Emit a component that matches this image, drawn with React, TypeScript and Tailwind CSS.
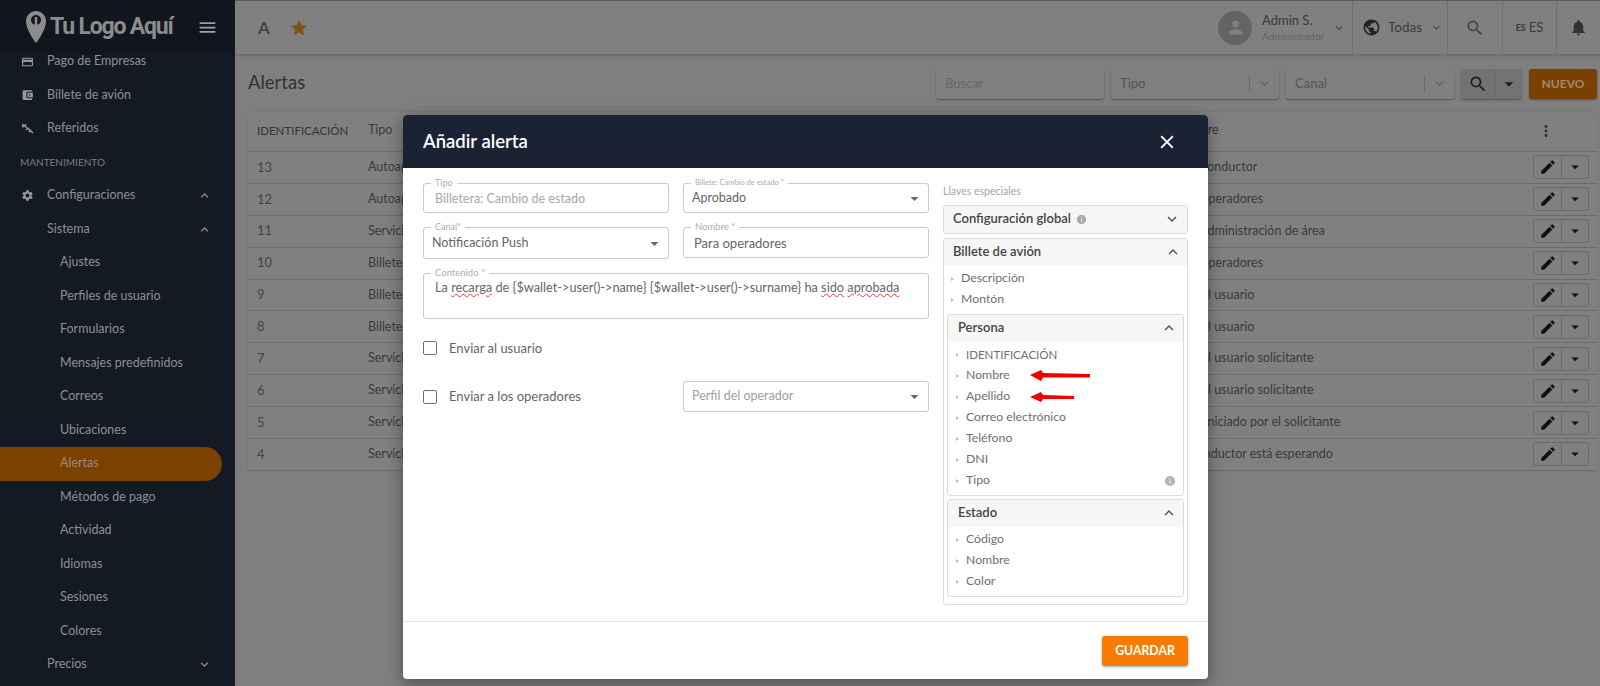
import {
  MdAccountBalanceWallet,
  MdArrowDropDown,
  MdClose,
  MdCreditCard,
  MdEdit,
  MdExpandLess,
  MdExpandMore,
  MdInfo,
  MdMenu,
  MdMoreVert,
  MdNotifications,
  MdPerson,
  MdPublic,
  MdSearch,
  MdSettings,
  MdStar,
} from "react-icons/md";

const subItems = [
  "Ajustes",
  "Perfiles de usuario",
  "Formularios",
  "Mensajes predefinidos",
  "Correos",
  "Ubicaciones",
  "Alertas",
  "Métodos de pago",
  "Actividad",
  "Idiomas",
  "Sesiones",
  "Colores",
];

const rows = [
  { id: "13", tipo: "Autoaprobado", dest: "Para conductor" },
  { id: "12", tipo: "Autoaprobado", dest: "Para operadores" },
  { id: "11", tipo: "Servicio", dest: "Para administración de área" },
  { id: "10", tipo: "Billetera", dest: "Para operadores" },
  { id: "9", tipo: "Billetera", dest: "Para el usuario" },
  { id: "8", tipo: "Billetera", dest: "Para el usuario" },
  { id: "7", tipo: "Servicio", dest: "Para el usuario solicitante" },
  { id: "6", tipo: "Servicio", dest: "Para el usuario solicitante" },
  { id: "5", tipo: "Servicio", dest: "Viaje iniciado por el solicitante" },
  { id: "4", tipo: "Servicio", dest: "Su conductor está esperando" },
];

function Sidebar() {
  return (
    <aside className="flex h-full w-[235px] shrink-0 flex-col overflow-hidden bg-[#141a24] text-[12.5px] text-[#8f8f8f]">
      <div className="z-10 flex h-[54px] shrink-0 items-center bg-[#10151e] pl-[26px] pr-[17px]">
        <svg width="20" height="32" viewBox="0 0 20 32" className="shrink-0">
          <path
            d="M10 0C4.500 0 0 4.500 0 10c0 7 6 17 10 22 4-5 10-15 10-22C20 4.500 15.500 0 10 0z"
            fill="#8c8c8c"
          />
          <circle cx="10" cy="9" r="5" fill="#10151e" />
          <path d="M10 6v12" stroke="#8c8c8c" strokeWidth="2.500" />
        </svg>
        <span className="ml-[4px] whitespace-nowrap font-['Roboto'] text-[23px] font-bold tracking-[-1.2px] text-[#8c8c8c]">
          Tu Logo Aquí
        </span>
        <MdMenu className="ml-auto shrink-0 text-[21px] text-[#a0a0a0]" />
      </div>
      <div className="-mt-[9px] flex flex-col">
        <div className="flex h-[33.5px] items-center pl-[21px]">
          <MdCreditCard className="w-[13px] text-[14px] text-[#9a9a9a]" />
          <span className="ml-[13px]">Pago de Empresas</span>
        </div>
        <div className="flex h-[33.5px] items-center pl-[21px]">
          <MdAccountBalanceWallet className="w-[13px] text-[14px] text-[#9a9a9a]" />
          <span className="ml-[13px]">Billete de avión</span>
        </div>
        <div className="flex h-[33.5px] items-center pl-[21px]">
          <svg width="13" height="13" viewBox="0 0 13 13" fill="none" stroke="#9a9a9a" strokeWidth="1.500">
            <path d="M1 2l4 3 3 2 4 4M1 5l2-1M5 2l-1 2M5 8l2-2M8 10l2-2" />
          </svg>
          <span className="ml-[13px]">Referidos</span>
        </div>
        <div className="flex h-[33.5px] items-center pl-[20px] text-[10px] text-[#7d7d7d]">MANTENIMIENTO</div>
        <div className="flex h-[33.5px] items-center pl-[21px] pr-[23px]">
          <MdSettings className="w-[13px] text-[15px] text-[#9a9a9a]" />
          <span className="ml-[13px]">Configuraciones</span>
          <MdExpandLess className="ml-auto text-[15px]" />
        </div>
        <div className="flex h-[33.5px] items-center pl-[47px] pr-[23px]">
          <span>Sistema</span>
          <MdExpandLess className="ml-auto text-[15px]" />
        </div>
        {subItems.map((item) =>
          item === "Alertas" ? (
            <div key={item} className="mr-[13px] flex h-[33.5px] items-center rounded-r-full bg-[#7a4100] pl-[60px] text-[#9a8a78]">
              {item}
            </div>
          ) : (
            <div key={item} className="flex h-[33.5px] items-center pl-[60px]">
              {item}
            </div>
          )
        )}
        <div className="flex h-[33.5px] items-center pl-[47px] pr-[23px]">
          <span>Precios</span>
          <MdExpandMore className="ml-auto text-[15px]" />
        </div>
      </div>
    </aside>
  );
}

function TopBar() {
  return (
    <header className="flex h-[55px] shrink-0 items-center justify-between border-b border-t border-b-[#6d6d6d] border-t-[#5c5c5c] bg-[#808080] pl-[23px] text-[#3f3f3f] shadow-[0_1px_2px_rgba(0,0,0,0.15)]">
      <div className="flex items-center gap-[19px]">
        <span className="text-[17px] font-bold text-[#444]">A</span>
        <MdStar className="text-[20px] text-[#7d5410]" />
      </div>
      <div className="flex h-full items-center">
        <div className="flex h-full items-center pr-[6px]">
          <div className="flex h-[34px] w-[34px] items-center justify-center rounded-full bg-[#636363]">
            <MdPerson className="text-[21px] text-[#808080]" />
          </div>
          <div className="ml-[10px] flex w-[70px] flex-col leading-none">
            <span className="text-[13px] text-[#3a3a3a]">Admin S.</span>
            <span className="mt-[4px] text-[10px] text-[#626262]">Administrador</span>
          </div>
          <MdExpandMore className="text-[14px] text-[#444]" />
        </div>
        <div className="flex h-full w-[95px] items-center border-l border-[#707070] pl-[9px]">
          <MdPublic className="text-[19px] text-[#222]" />
          <span className="ml-[7px] text-[13.5px] text-[#3a3a3a]">Todas</span>
          <MdExpandMore className="ml-[8px] text-[13px] text-[#444]" />
        </div>
        <div className="flex h-full w-[55px] items-center justify-center border-l border-[#707070]">
          <MdSearch className="text-[20px] text-[#444]" />
        </div>
        <div className="flex h-full w-[54px] items-center justify-center border-l border-[#707070] text-[13px] text-[#3a3a3a]">
          <span className="mr-[3px] text-[9px] font-bold">ES</span>ES
        </div>
        <div className="flex h-full w-[44px] items-center justify-center border-l border-[#707070]">
          <MdNotifications className="text-[19px] text-[#333]" />
        </div>
      </div>
    </header>
  );
}

function FilterSelect({ label }: { label: string }) {
  return (
    <div className="flex h-[30px] w-[168px] items-center rounded-[3px] bg-[#808080] pl-[9px] text-[13px] text-[#555] shadow-[0_1px_2px_rgba(0,0,0,0.35)]">
      <span>{label}</span>
      <span className="ml-auto h-[17px] w-px bg-[#6b6b6b]" />
      <MdExpandMore className="mx-[6px] text-[17px] text-[#666]" />
    </div>
  );
}

function Toolbar() {
  return (
    <div className="flex h-[57px] items-center justify-between pl-[13px] pr-[3px]">
      <h1 className="pb-[2px] text-[18.5px] text-[#333]">Alertas</h1>
      <div className="flex items-center gap-[7px]">
        <div className="flex h-[30px] w-[168px] items-center rounded-[3px] bg-[#808080] pl-[9px] text-[13px] text-[#666] shadow-[0_1px_2px_rgba(0,0,0,0.35)]">
          Buscar
        </div>
        <FilterSelect label="Tipo" />
        <FilterSelect label="Canal" />
        <div className="flex h-[30px] w-[61px] rounded-[3px] bg-[#737373] shadow-[0_1px_2px_rgba(0,0,0,0.35)]">
          <div className="flex flex-1 items-center justify-center border-r border-[#666]">
            <MdSearch className="text-[20px] text-[#1c1c1c]" />
          </div>
          <div className="flex w-[27px] items-center justify-center">
            <MdArrowDropDown className="text-[20px] text-[#1c1c1c]" />
          </div>
        </div>
        <div className="flex h-[30px] w-[68px] items-center justify-center rounded-[3px] bg-[#7a4000] text-[12px] font-bold text-[#a08a70] shadow-[0_1px_2px_rgba(0,0,0,0.35)]">
          NUEVO
        </div>
      </div>
    </div>
  );
}

function AlertTable() {
  return (
    <div className="ml-[13px] mr-[3px] rounded-t-[6px] bg-[#808080] text-[12.5px] text-[#3a3a3a] shadow-[0_0_2px_rgba(0,0,0,0.15)]">
      <div className="grid h-[40px] grid-cols-[111px_806px_359px_1fr] items-center border-b border-[#6d6d6d] pb-[2px] pl-[9px]">
        <span className="text-[11.5px] text-[#333]">IDENTIFICACIÓN</span>
        <span>Tipo</span>
        <span>Nombre</span>
        <MdMoreVert className="ml-[4px] text-[18px] text-[#333]" />
      </div>
      {rows.map((row) => (
        <div
          key={row.id}
          className="grid h-[31.9px] grid-cols-[111px_806px_359px_1fr] items-center border-b border-[#6d6d6d] pl-[9px]"
        >
          <span className="text-[13px] text-[#444]">{row.id}</span>
          <span>{row.tipo}</span>
          <span className="whitespace-nowrap">{row.dest}</span>
          <div className="flex h-[24px] w-[56px] rounded-[3px] border border-[#6a6a6a]">
            <div className="flex w-[28px] items-center justify-center border-r border-[#6a6a6a]">
              <MdEdit className="text-[18px] text-[#111]" />
            </div>
            <div className="flex flex-1 items-center justify-center">
              <MdArrowDropDown className="text-[18px] text-[#111]" />
            </div>
          </div>
        </div>
      ))}
    </div>
  );
}

function Field({
  label,
  className,
  labelClass,
  children,
}: {
  label: string;
  className: string;
  labelClass: string;
  children: React.ReactNode;
}) {
  return (
    <div className={`relative rounded-[3px] border border-[#c9c9c9] ${className}`}>
      <span className={`absolute -top-[6px] left-[7px] bg-white px-[4px] leading-[10px] text-[#adadad] ${labelClass}`}>
        {label}
      </span>
      {children}
    </div>
  );
}

function KeyItem({ label, info, small }: { label: string; info?: boolean; small?: boolean }) {
  return (
    <div className={`flex h-[21px] items-center text-[#6f6f6f] ${small ? "text-[11.5px]" : "text-[12.25px]"}`}>
      <span className="h-0 w-0 border-y-[2px] border-l-[3px] border-y-transparent border-l-[#bdbdbd]" />
      <span className="ml-[7px]">{label}</span>
      {info && <MdInfo className="ml-auto mr-[3px] text-[12px] text-[#b5b5b5]" />}
    </div>
  );
}

function KeyGroup({ title, items }: { title: string; items: { label: string; info?: boolean; small?: boolean }[] }) {
  return (
    <div className="rounded-[3px] border border-[#dcdcdc]">
      <div className="flex h-[27px] items-center bg-[#f6f6f6] pb-[2px] pl-[10px] pr-[5px] text-[13px] font-semibold text-[#444]">
        {title}
        <MdExpandLess className="ml-auto text-[18px] text-[#555]" />
      </div>
      <div className="pb-[4px] pl-[8px] pr-[4px] pt-[2px]">
        {items.map((item) => (
          <KeyItem key={item.label} {...item} />
        ))}
      </div>
    </div>
  );
}

const spell = "underline decoration-[#e53935] decoration-wavy decoration-1";

function AlertModal() {
  return (
    <div className="ml-[403px] mt-[115px] flex h-[564px] w-[805px] flex-col overflow-hidden rounded-[4px] bg-white shadow-[0_4px_16px_rgba(0,0,0,0.4)]">
      <div className="flex h-[53px] shrink-0 items-center justify-between bg-[#1a2333] pl-[20px] pr-[30px] text-white">
        <h2 className="text-[18.5px] font-semibold">Añadir alerta</h2>
        <MdClose className="text-[22px]" />
      </div>
      <div className="flex flex-1 gap-[14px] pl-[20px] pr-[20px] pt-[15px]">
        <div className="w-[506px] text-[12.5px] text-[#666]">
          <div className="grid grid-cols-2 gap-x-[14px] gap-y-[14px]">
            <Field label="Tipo" labelClass="text-[9px]" className="flex h-[30px] items-center pl-[11px] pt-[3px] text-[#a8a8a8]">
              Billetera: Cambio de estado
            </Field>
            <Field label="Billete: Cambio de estado *" labelClass="text-[7.5px]" className="flex h-[30px] items-center pl-[8px] pr-[4px]">
              Aprobado
              <MdArrowDropDown className="ml-auto text-[19px] text-[#666]" />
            </Field>
            <Field label="Canal*" labelClass="text-[9px]" className="flex h-[32px] items-center pl-[8px] pr-[4px]">
              Notificación Push
              <MdArrowDropDown className="ml-auto text-[19px] text-[#666]" />
            </Field>
            <Field label="Nombre *" labelClass="text-[9.5px]" className="flex h-[31px] items-center pl-[10px] pt-[3px] text-[13px]">
              Para operadores
            </Field>
            <Field label="Contenido *" labelClass="text-[9.5px]" className="col-span-2 h-[46px] pl-[11px] pt-[4px] text-[12.75px]">
              La <span className={spell}>recarga</span> de {"{$wallet->user()->name}"}{" "}
              {"{$wallet->user()->surname}"} ha <span className={spell}>sido</span>{" "}
              <span className={spell}>aprobada</span>
            </Field>
          </div>
          <div className="mt-[22px] flex h-[14px] items-center text-[13px]">
            <span className="h-[14px] w-[14px] rounded-[2px] border-[1.5px] border-[#6e6e6e]" />
            <span className="ml-[12px] pt-[1px]">Enviar al usuario</span>
          </div>
          <div className="mt-[26px] grid grid-cols-2 gap-x-[14px]">
            <div className="flex items-center text-[13px]">
              <span className="h-[14px] w-[14px] rounded-[2px] border-[1.5px] border-[#6e6e6e]" />
              <span className="ml-[12px]">Enviar a los operadores</span>
            </div>
            <div className="flex h-[31px] items-center rounded-[3px] border border-[#c9c9c9] pl-[8px] pr-[4px] text-[#a0a0a0]">
              Perfil del operador
              <MdArrowDropDown className="ml-auto text-[19px] text-[#666]" />
            </div>
          </div>
        </div>
        <div className="relative w-[245px]">
          <div className="pb-[8px] pt-[2px] text-[10.5px] leading-[12px] text-[#a5a5a5]">Llaves especiales</div>
          <div className="flex h-[29px] items-center rounded-[3px] border border-[#dcdcdc] bg-[#f6f6f6] pb-[1px] pl-[9px] pr-[6px] text-[13px] font-semibold text-[#444]">
            Configuración global
            <MdInfo className="ml-[5px] text-[11px] text-[#aaa]" />
            <MdExpandMore className="ml-auto text-[18px] text-[#555]" />
          </div>
          <div className="mt-[4px] rounded-[3px] border border-[#dcdcdc]">
            <div className="flex h-[27px] items-center bg-[#f6f6f6] pb-[2px] pl-[9px] pr-[5px] text-[13px] font-semibold text-[#444]">
              Billete de avión
              <MdExpandLess className="ml-auto text-[18px] text-[#555]" />
            </div>
            <div className="pl-[7px] pt-[2px]">
              <KeyItem label="Descripción" />
              <KeyItem label="Montón" />
            </div>
            <div className="flex flex-col gap-[3px] px-[3px] pb-[7px] pt-[4px]">
              <KeyGroup
                title="Persona"
                items={[
                  { label: "IDENTIFICACIÓN", small: true },
                  { label: "Nombre" },
                  { label: "Apellido" },
                  { label: "Correo electrónico" },
                  { label: "Teléfono" },
                  { label: "DNI" },
                  { label: "Tipo", info: true },
                ]}
              />
              <KeyGroup
                title="Estado"
                items={[{ label: "Código" }, { label: "Nombre" }, { label: "Color" }]}
              />
            </div>
          </div>
          {/* flechas rojas dibujadas sobre la captura */}
          <svg className="absolute left-[87px] top-[187px]" width="62" height="36" viewBox="0 0 62 36" fill="#f00000">
            <path d="M0 5 L11 0 L13 3 L60 4 L60 7.500 L13 7.500 L11 11 Z" />
            <path d="M0 27 L11 22 L13 25 L44 26 L44 29 L13 29 L11 32 Z" />
          </svg>
        </div>
      </div>
      <div className="flex h-[58px] shrink-0 items-center justify-end border-t border-[#e6e6e6] pr-[20px]">
        <button className="mt-[1px] h-[30px] w-[86px] rounded-[3px] bg-[#f57c00] text-[12.25px] font-bold text-white shadow-[0_1px_3px_rgba(0,0,0,0.35)]">
          GUARDAR
        </button>
      </div>
    </div>
  );
}

export default function App() {
  return (
    <div className="relative flex h-[686px] w-[1600px] overflow-hidden bg-[#7f7f7f] font-['Lato','Liberation_Sans',sans-serif]">
      <Sidebar />
      <main className="flex min-w-0 flex-1 flex-col">
        <TopBar />
        <Toolbar />
        <AlertTable />
      </main>
      <div className="absolute inset-0">
        <AlertModal />
      </div>
    </div>
  );
}
